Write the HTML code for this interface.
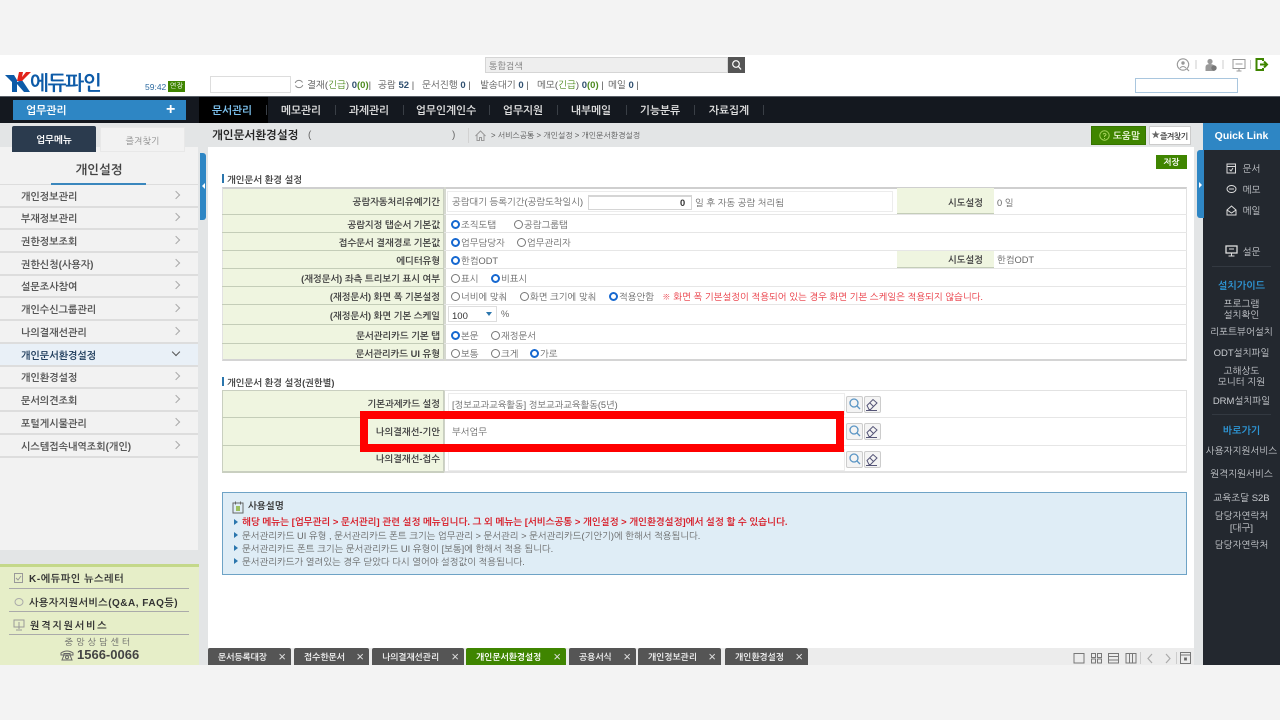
<!DOCTYPE html>
<html lang="ko"><head><meta charset="utf-8"><title>개인문서환경설정</title>
<style>
*{box-sizing:border-box}
html,body{margin:0;padding:0}
body{width:1280px;height:720px;overflow:hidden;background:#f3f3f3;position:relative;font-family:"Liberation Sans","NanumGothic","Noto Sans CJK KR",sans-serif;font-size:10px;color:#555}
.t{position:absolute;white-space:nowrap;line-height:14px;transform:translateY(2px);filter:blur(.25px)}
.b{position:absolute}
.c{text-align:center}
.lb{color:#444;font-weight:bold;font-size:9.3px;letter-spacing:0}
.v{color:#666;font-size:9.3px}
.r{position:absolute;width:9px;height:9px;border:1px solid #777;border-radius:50%;background:#fff}
.r.on{border:2.5px solid #1668d0}
.m{position:absolute;left:0;width:198px;height:23px;border-bottom:2px solid #ddd}
.m span{position:absolute;left:21px;top:4px;line-height:14px;font-size:10px;color:#555;font-weight:bold;white-space:nowrap;transform:translateY(2px);filter:blur(.25px)}
.m i{position:absolute;left:173px;top:7px;width:6px;height:6px;border-top:1px solid #aaa;border-right:1px solid #aaa;transform:rotate(45deg)}
.nav{position:absolute;top:103px;line-height:16px;color:#ddd;font-size:10.7px;font-weight:bold;white-space:nowrap;transform:translateX(-50%);filter:blur(.25px)}
.sp{position:absolute;top:105px;width:1px;height:10px;background:#3a3f46}
.tab{position:absolute;top:648px;height:17px;background:#555;border-radius:2px 2px 0 0;color:#eee;font-size:8.7px;font-weight:bold;line-height:18px;padding-left:10px;white-space:nowrap}
.tab b{position:absolute;right:5px;top:0;font-weight:normal;color:#ddd;font-size:13px;line-height:17px}
.q{position:absolute;left:1203px;width:77px;text-align:center;color:#c9ccd0;font-size:9.5px;line-height:14px;white-space:nowrap;transform:translateY(2px);filter:blur(.25px)}
.ic{position:absolute;width:17px;height:17px;border:1px solid #ccc;background:#f4f4f4;border-radius:2px}
.rw{position:absolute;left:222px;width:965px;height:1px;background:#e6e6e6}
.thl{position:absolute;left:222px;width:222px;background:#eff5e0;border-bottom:1px solid #c4cdb8}
</style></head><body>

<div class="b" style="left:0;top:55px;width:1280px;height:610px;background:#fff"></div>

<!-- header -->
<svg class="b" style="left:4px;top:70px" width="28" height="26" viewBox="0 0 28 26"><path d="M1 5 H10 L13 10 V22 H8 V12 Z" fill="#0d5ba8"/><path d="M13 12 L18 10 L26 22 H20 L13 14 Z" fill="#0d5ba8"/><path d="M13 11 L15 2 H19 L18 7 L22 2 H27 L18 11 Z" fill="#e2231a"/></svg>
<div class="t" style="left:30px;top:70px;font-size:20px;line-height:24px;font-weight:bold;color:#0d5ba8;letter-spacing:-1.1px">에듀파인</div>
<div class="t" style="left:145px;top:78px;font-size:8.5px;color:#2c6aa0">59:42</div>
<div class="b" style="left:168px;top:81px;width:17px;height:11px;background:#3f8500;color:#fff;font-size:7px;line-height:11px;text-align:center">연장</div>
<div class="b" style="left:210px;top:76px;width:81px;height:17px;border:1px solid #ddd;background:#fff"></div>
<svg class="b" style="left:294px;top:79px" width="10" height="10" viewBox="0 0 10 10"><path d="M8.5 3.5A4 4 0 0 0 1.2 4M1.5 6.5A4 4 0 0 0 8.8 6" fill="none" stroke="#888"/></svg>
<div class="t" style="left:307px;top:77px;font-size:9.5px;color:#555">결재(<span style="color:#4c8a1e">긴급</span>) <b style="color:#2f4f6f">0</b><span style="color:#4c8a1e"><b>(0)</b></span>|</div>
<div class="t" style="left:378px;top:77px;font-size:9.5px;color:#555">공람 <b style="color:#2f4f6f">52</b> |</div>
<div class="t" style="left:422px;top:77px;font-size:9.5px;color:#555">문서진행 <b style="color:#2f4f6f">0</b> |</div>
<div class="t" style="left:480px;top:77px;font-size:9.5px;color:#555">발송대기 <b style="color:#2f4f6f">0</b> |</div>
<div class="t" style="left:537px;top:77px;font-size:9.5px;color:#555">메모(<span style="color:#4c8a1e">긴급</span>) <b style="color:#2f4f6f">0</b><span style="color:#4c8a1e"><b>(0)</b></span> |</div>
<div class="t" style="left:608px;top:77px;font-size:9.5px;color:#555">메일 <b style="color:#2f4f6f">0</b> |</div>

<div class="b" style="left:485px;top:57px;width:243px;height:16px;background:#eee;border:1px solid #d5d5d5"></div>
<div class="t" style="left:489px;top:57px;font-size:9px;color:#777">통합검색</div>
<div class="b" style="left:728px;top:57px;width:17px;height:16px;background:#555"></div>
<svg class="b" style="left:730px;top:59px" width="13" height="12" viewBox="0 0 13 12"><circle cx="6" cy="5" r="3.3" fill="none" stroke="#fff" stroke-width="1.2"/><path d="M8.5 7.5L11 10.5" stroke="#fff" stroke-width="1.3"/></svg>

<svg class="b" style="left:1175px;top:57px" width="100" height="16" viewBox="0 0 100 16">
<circle cx="8" cy="7.500" r="5.700" fill="none" stroke="#999" stroke-width="1.100"/><circle cx="8" cy="6" r="1.700" fill="#999"/><path d="M5 11q3-3 6 0" fill="none" stroke="#999"/><path d="M12 12l2 2" stroke="#999" stroke-width="1.200"/>
<path d="M21 3v9" stroke="#ccc"/>
<circle cx="35" cy="4.500" r="2.600" fill="#999"/><path d="M30.500 14V10q0-3 4.500-3t4.500 3v4z" fill="#999"/><circle cx="39" cy="11" r="2.700" fill="#777"/>
<path d="M48 3v9" stroke="#ccc"/>
<rect x="58" y="2.500" width="12" height="9" fill="none" stroke="#999"/><path d="M60.500 7h7M61.500 14h5M64 11.500v2.500" stroke="#999"/>
<path d="M75.500 3v9" stroke="#ccc"/>
<path d="M88 4V2H81.500V13H88V11" fill="none" stroke="#3f8500" stroke-width="2"/><path d="M85 7.500h6M89 4.500l3 3-3 3" fill="none" stroke="#3f8500" stroke-width="2"/>
</svg>
<div class="b" style="left:1135px;top:78px;width:103px;height:15px;border:1px solid #a9c6de;background:#fff"></div>

<!-- nav -->
<div class="b" style="left:0;top:96px;width:1280px;height:27px;background:#14181f;border-top:1px solid #5a6068"></div>
<div class="b" style="left:13px;top:100px;width:173px;height:20px;background:#2e86c4"></div>
<div class="t" style="left:26px;top:102px;color:#fff;font-size:10.800px;font-weight:bold">업무관리</div>
<div class="t" style="left:166px;top:101px;color:#fff;font-size:16px;font-weight:bold">+</div>
<div class="b" style="left:199px;top:97px;width:69px;height:26px;background:#000"></div>
<div class="nav" style="left:232px;color:#7cc0ec">문서관리</div>
<div class="nav" style="left:301px">메모관리</div>
<div class="nav" style="left:369px">과제관리</div>
<div class="nav" style="left:446px">업무인계인수</div>
<div class="nav" style="left:523px">업무지원</div>
<div class="nav" style="left:591px">내부메일</div>
<div class="nav" style="left:660px">기능분류</div>
<div class="nav" style="left:729px">자료집계</div>
<div class="sp" style="left:266px"></div><div class="sp" style="left:335px"></div><div class="sp" style="left:403px"></div><div class="sp" style="left:489px"></div><div class="sp" style="left:557px"></div><div class="sp" style="left:626px"></div><div class="sp" style="left:694px"></div><div class="sp" style="left:763px"></div>

<!-- sub bar -->
<div class="b" style="left:0;top:123px;width:1203px;height:24px;background:#e3e5e6"></div>
<div class="b" style="left:198px;top:147px;width:10px;height:518px;background:#e3e5e6"></div>
<div class="b" style="left:1194px;top:147px;width:9px;height:518px;background:#e3e5e6"></div>
<div class="t" style="left:212px;top:127px;font-size:11.500px;font-weight:bold;color:#222">개인문서환경설정</div>
<div class="t" style="left:308px;top:127px;color:#666">(</div>
<div class="t" style="left:452px;top:127px;color:#666">)</div>
<div class="b" style="left:468px;top:128px;width:1px;height:15px;background:#d2d2d2"></div>
<svg class="b" style="left:475px;top:130px" width="11" height="11" viewBox="0 0 11 11"><path d="M.5 6L5.500 1l5 5M2 5v5.500h2.500V7.500h2v3H9V5" fill="none" stroke="#999"/></svg>
<div class="t" style="left:491px;top:127px;font-size:7.800px;color:#555">&gt; 서비스공통 &gt; 개인설정 &gt; 개인문서환경설정</div>
<div class="b" style="left:1091px;top:126px;width:55px;height:19px;background:#3f8500;border:1px solid #367300"></div>
<svg class="b" style="left:1099px;top:130px" width="11" height="11" viewBox="0 0 11 11"><circle cx="5.500" cy="5.500" r="4.700" fill="none" stroke="#a6d45c"/><path d="M4 4.300Q5.500 2.500 7 4.300Q7 5.500 5.500 6V7M5.500 8v1" fill="none" stroke="#a6d45c"/></svg>
<div class="t" style="left:1113px;top:128px;font-size:9.500px;font-weight:bold;color:#eaf5d8">도움말</div>
<div class="b" style="left:1149px;top:126px;width:42px;height:19px;background:#fff;border:1px solid #ccc"></div>
<div class="t" style="left:1151px;top:127px;font-size:10px;color:#666">★</div>
<div class="t" style="left:1160px;top:128px;font-size:8px;font-weight:bold;color:#444;letter-spacing:-.6px">즐겨찾기</div>

<!-- left panel -->
<div class="b" style="left:0;top:147px;width:198px;height:403px;background:#f2f2f2"></div>
<div class="b" style="left:12px;top:126px;width:84px;height:26px;background:#2b3b4e;border-radius:2px 2px 0 0"></div>
<div class="t c" style="left:12px;top:132px;width:84px;color:#fff;font-size:9.500px;font-weight:bold">업무메뉴</div>
<div class="b" style="left:100px;top:127px;width:85px;height:25px;background:#f2f2f2;border:1px solid #e8e8e8"></div>
<div class="t c" style="left:100px;top:132px;width:85px;color:#888;font-size:9px">즐겨찾기</div>
<div class="t c" style="left:0;top:160px;width:198px;font-size:12.500px;line-height:16px;font-weight:bold;color:#444">개인설정</div>
<div class="b" style="left:0;top:184px;width:198px;height:1px;background:#ddd"></div>
<div class="b" style="left:51px;top:183px;width:95px;height:1.500px;background:#3a87bd"></div>
<div class="m" style="top:185px"><span>개인정보관리</span><i></i></div>
<div class="m" style="top:207px"><span>부재정보관리</span><i></i></div>
<div class="m" style="top:230px"><span>권한정보조회</span><i></i></div>
<div class="m" style="top:253px"><span>권한신청(사용자)</span><i></i></div>
<div class="m" style="top:275px"><span>설문조사참여</span><i></i></div>
<div class="m" style="top:298px"><span>개인수신그룹관리</span><i></i></div>
<div class="m" style="top:321px"><span>나의결재선관리</span><i></i></div>
<div class="m" style="top:344px;background:#e9f0f7"><span style="color:#23405f">개인문서환경설정</span><i style="border-color:#555;transform:rotate(135deg);top:5px"></i></div>
<div class="m" style="top:366px"><span>개인환경설정</span><i></i></div>
<div class="m" style="top:389px"><span>문서의견조회</span><i></i></div>
<div class="m" style="top:412px"><span>포털게시물관리</span><i></i></div>
<div class="m" style="top:435px"><span>시스템접속내역조회(개인)</span><i></i></div>
<div class="b" style="left:0;top:550px;width:198px;height:14px;background:#e3e5e6"></div>
<div class="b" style="left:200px;top:153px;width:6px;height:67px;background:#2e86c4;border-radius:0 3px 3px 0"></div>
<div class="b" style="left:202px;top:183px;border-right:3px solid #fff;border-top:3px solid transparent;border-bottom:3px solid transparent"></div>

<!-- green panel -->
<div class="b" style="left:0;top:564px;width:199px;height:101px;background:#e6eec8;border-top:3px solid #c4d88a"></div>
<svg class="b" style="left:13px;top:572px" width="12" height="62" viewBox="0 0 12 62"><rect x="1.500" y="1.500" width="8" height="9" fill="none" stroke="#999"/><path d="M3 6l2 2 3-4" fill="none" stroke="#999"/><ellipse cx="6" cy="30" rx="4" ry="3.500" fill="none" stroke="#aaa"/><rect x="1" y="48" width="10" height="7" fill="none" stroke="#999"/><path d="M6 50v7M3 58h6" stroke="#999"/></svg>
<div class="t" style="left:29px;top:571px;font-size:10px;font-weight:bold;color:#333;letter-spacing:.6px">K-에듀파인 뉴스레터</div>
<div class="b" style="left:9px;top:588px;width:180px;height:1px;background:#aaa"></div>
<div class="t" style="left:29px;top:595px;font-size:10px;font-weight:bold;color:#333;letter-spacing:.5px">사용자지원서비스(Q&amp;A, FAQ등)</div>
<div class="b" style="left:9px;top:611px;width:180px;height:1px;background:#aaa"></div>
<div class="t" style="left:30px;top:618px;font-size:10px;font-weight:bold;color:#333;letter-spacing:1.8px">원격지원서비스</div>
<div class="b" style="left:9px;top:634px;width:180px;height:1px;background:#aaa"></div>
<div class="t c" style="left:0;top:633px;width:198px;font-size:9px;color:#666;letter-spacing:3px">중앙상담센터</div>
<svg class="b" style="left:60px;top:650px" width="14" height="11" viewBox="0 0 14 11"><path d="M1 3Q7-1 13 3V5H10V3.500H4V5H1ZM4 5H10L12 10H2Z" fill="none" stroke="#666"/><circle cx="7" cy="7.300" r="1.500" fill="none" stroke="#666"/></svg>
<div class="t" style="left:77px;top:645px;font-size:13px;line-height:16px;font-weight:bold;color:#444">1566-0066</div>

<!-- section 1 -->
<div class="b" style="left:222px;top:174px;width:2px;height:9px;background:#2b76ad"></div>
<div class="t lb" style="left:227px;top:171px;color:#444">개인문서 환경 설정</div>
<div class="b" style="left:1156px;top:155px;width:31px;height:14px;background:#3f8500;color:#fff;font-size:8.500px;font-weight:bold;line-height:14px;text-align:center">저장</div>

<div class="thl" style="top:187px;height:174px;border:1px solid #c9cfc0"></div>
<div class="b" style="left:222px;top:187px;width:965px;height:174px;border:1px solid #e2e2e2;border-top:2px solid #cfcfcf;border-bottom:2px solid #d4d4d4"></div>
<div class="b" style="left:444px;top:187px;width:2px;height:174px;background:#d5d8cf"></div>
<div class="rw" style="top:214px"></div><div class="rw" style="top:232px"></div><div class="rw" style="top:250px"></div><div class="rw" style="top:268px"></div><div class="rw" style="top:286px"></div><div class="rw" style="top:304px"></div><div class="rw" style="top:324px"></div><div class="rw" style="top:343px"></div>
<div class="b" style="left:222px;top:214px;width:222px;height:1px;background:#c4cdb8"></div><div class="b" style="left:222px;top:232px;width:222px;height:1px;background:#c4cdb8"></div><div class="b" style="left:222px;top:250px;width:222px;height:1px;background:#c4cdb8"></div><div class="b" style="left:222px;top:268px;width:222px;height:1px;background:#c4cdb8"></div><div class="b" style="left:222px;top:286px;width:222px;height:1px;background:#c4cdb8"></div><div class="b" style="left:222px;top:304px;width:222px;height:1px;background:#c4cdb8"></div><div class="b" style="left:222px;top:324px;width:222px;height:1px;background:#c4cdb8"></div><div class="b" style="left:222px;top:343px;width:222px;height:1px;background:#c4cdb8"></div>

<div class="t lb" style="right:840px;top:193px">공람자동처리유예기간</div>
<div class="t lb" style="right:840px;top:216px">공람지정 탭순서 기본값</div>
<div class="t lb" style="right:840px;top:234px">접수문서 결재경로 기본값</div>
<div class="t lb" style="right:840px;top:252px">에디터유형</div>
<div class="t lb" style="right:840px;top:270px">(재정문서) 좌측 트리보기 표시 여부</div>
<div class="t lb" style="right:840px;top:288px">(재정문서) 화면 폭 기본설정</div>
<div class="t lb" style="right:840px;top:307px">(재정문서) 화면 기본 스케일</div>
<div class="t lb" style="right:840px;top:327px">문서관리카드 기본 탭</div>
<div class="t lb" style="right:840px;top:345px">문서관리카드 UI 유형</div>

<div class="b" style="left:447px;top:191px;width:446px;height:21px;border:1px solid #ececec"></div>
<div class="t v" style="left:452px;top:193px">공람대기 등록기간(공람도착일시)</div>
<div class="b" style="left:588px;top:195px;width:104px;height:15px;border:1px solid #d5d5d5;border-top-width:2px"></div>
<div class="t v" style="left:680px;top:194px;color:#333;font-weight:bold">0</div>
<div class="t v" style="left:695px;top:194px">일 후 자동 공람 처리됨</div>
<div class="b" style="left:897px;top:188px;width:97px;height:26px;background:#eff5e0;border-bottom:1px solid #c4cdb8"></div>
<div class="t lb" style="right:297px;top:194px">시도설정</div>
<div class="t v" style="left:997px;top:194px">0 일</div>
<div class="b" style="left:897px;top:251px;width:97px;height:17px;background:#eff5e0;border-bottom:1px solid #c4cdb8"></div>
<div class="t lb" style="right:297px;top:251px">시도설정</div>
<div class="t v" style="left:997px;top:251px">한컴ODT</div>

<div class="r on" style="left:451px;top:220px"></div><div class="t v" style="left:461px;top:216px">조직도탭</div>
<div class="r" style="left:514px;top:220px"></div><div class="t v" style="left:524px;top:216px">공람그룹탭</div>
<div class="r on" style="left:451px;top:238px"></div><div class="t v" style="left:461px;top:234px">업무담당자</div>
<div class="r" style="left:517px;top:238px"></div><div class="t v" style="left:527px;top:234px">업무관리자</div>
<div class="r on" style="left:451px;top:256px"></div><div class="t v" style="left:461px;top:252px">한컴ODT</div>
<div class="r" style="left:451px;top:274px"></div><div class="t v" style="left:461px;top:270px">표시</div>
<div class="r on" style="left:491px;top:274px"></div><div class="t v" style="left:501px;top:270px">비표시</div>
<div class="r" style="left:451px;top:292px"></div><div class="t v" style="left:461px;top:288px">너비에 맞춰</div>
<div class="r" style="left:520px;top:292px"></div><div class="t v" style="left:530px;top:288px">화면 크기에 맞춰</div>
<div class="r on" style="left:609px;top:292px"></div><div class="t v" style="left:619px;top:288px">적용안함</div>
<div class="t" style="left:662px;top:288px;font-size:9.350px;color:#e8303a">※ 화면 폭 기본설정이 적용되어 있는 경우 화면 기본 스케일은 적용되지 않습니다.</div>
<div class="b" style="left:448px;top:306px;width:49px;height:16px;border:1px solid #ddd"></div>
<div class="t" style="left:452px;top:308px;font-size:9.500px;color:#333">100</div>
<div class="b" style="left:486px;top:312px;border-top:4px solid #2b76ad;border-left:3px solid transparent;border-right:3px solid transparent"></div>
<div class="t v" style="left:501px;top:305px">%</div>
<div class="r on" style="left:451px;top:331px"></div><div class="t v" style="left:461px;top:327px">본문</div>
<div class="r" style="left:491px;top:331px"></div><div class="t v" style="left:501px;top:327px">재정문서</div>
<div class="r" style="left:451px;top:349px"></div><div class="t v" style="left:461px;top:345px">보통</div>
<div class="r" style="left:491px;top:349px"></div><div class="t v" style="left:501px;top:345px">크게</div>
<div class="r on" style="left:530px;top:349px"></div><div class="t v" style="left:540px;top:345px">가로</div>

<!-- section 2 -->
<div class="b" style="left:222px;top:377px;width:2px;height:9px;background:#2b76ad"></div>
<div class="t lb" style="left:227px;top:374px">개인문서 환경 설정(권한별)</div>
<div class="b" style="left:222px;top:390px;width:222px;height:83px;background:#eff5e0;border:1px solid #c9cfc0;border-bottom:2px solid #c9cfc0"></div>
<div class="b" style="left:444px;top:390px;width:743px;height:83px;border-top:1px solid #e2e2e2;border-bottom:2px solid #e2e2e2;border-right:1px solid #e2e2e2;border-left:1px solid #cfd3c8"></div>
<div class="b" style="left:222px;top:417px;width:222px;height:1px;background:#c4cdb8"></div>
<div class="b" style="left:222px;top:445px;width:222px;height:1px;background:#c4cdb8"></div>
<div class="rw" style="top:417px;left:444px;width:743px"></div><div class="rw" style="top:445px;left:444px;width:743px"></div>
<div class="t lb" style="right:840px;top:395px">기본과제카드 설정</div>
<div class="t lb" style="right:840px;top:423px">나의결재선-기안</div>
<div class="t lb" style="right:840px;top:450px">나의결재선-접수</div>
<div class="b" style="left:448px;top:393px;width:397px;height:22px;border:1px solid #ececec"></div>
<div class="t" style="left:452px;top:396px;font-size:9.200px;color:#666">[정보교과교육활동] 정보교과교육활동(5년)</div>
<div class="b" style="left:448px;top:449px;width:397px;height:22px;border:1px solid #ececec"></div>
<div class="b" style="left:360px;top:411px;width:484px;height:41px;border:8px solid #f00"></div>
<div class="t v" style="left:452px;top:423px">부서업무</div>

<div class="ic" style="left:846px;top:396px"></div><div class="ic" style="left:864px;top:396px"></div>
<div class="ic" style="left:846px;top:423px"></div><div class="ic" style="left:864px;top:423px"></div>
<div class="ic" style="left:846px;top:451px"></div><div class="ic" style="left:864px;top:451px"></div>
<svg class="b" style="left:846px;top:396px" width="35" height="72" viewBox="0 0 35 72" fill="none">
<g><circle cx="8" cy="7" r="4" stroke="#5a95c4" stroke-width="1.300"/><path d="M11 10l3 3" stroke="#5a95c4" stroke-width="1.300"/><path d="M21 9.500L27 3.500l4 3.500-6.500 6.500H23ZM23.500 6.500l4 4M20 14.500h11" stroke="#557" stroke-width="1"/></g>
<g transform="translate(0 27)"><circle cx="8" cy="7" r="4" stroke="#5a95c4" stroke-width="1.300"/><path d="M11 10l3 3" stroke="#5a95c4" stroke-width="1.300"/><path d="M21 9.500L27 3.500l4 3.500-6.500 6.500H23ZM23.500 6.500l4 4M20 14.500h11" stroke="#557" stroke-width="1"/></g>
<g transform="translate(0 55)"><circle cx="8" cy="7" r="4" stroke="#5a95c4" stroke-width="1.300"/><path d="M11 10l3 3" stroke="#5a95c4" stroke-width="1.300"/><path d="M21 9.500L27 3.500l4 3.500-6.500 6.500H23ZM23.500 6.500l4 4M20 14.500h11" stroke="#557" stroke-width="1"/></g>
</svg>

<!-- info box -->
<div class="b" style="left:222px;top:492px;width:965px;height:83px;background:#dfedf6;border:1px solid #6ea3c6"></div>
<svg class="b" style="left:232px;top:501px" width="12" height="13" viewBox="0 0 12 13" fill="none"><rect x="1" y="2" width="10" height="10" stroke="#666"/><path d="M3.500 .5v3M8.500 .5v3" stroke="#666"/><rect x="4" y="5" width="4" height="5" fill="#9bbf5e"/></svg>
<div class="t" style="left:248px;top:498px;font-size:9.500px;font-weight:bold;color:#333">사용설명</div>
<div class="b" style="left:234px;top:519px;border-left:4px solid #2b76ad;border-top:3px solid transparent;border-bottom:3px solid transparent"></div>
<div class="t" style="left:242px;top:514px;font-size:9.450px;font-weight:bold;color:#d81f2a">해당 메뉴는 [업무관리 &gt; 문서관리] 관련 설정 메뉴입니다. 그 외 메뉴는 [서비스공통 &gt; 개인설정 &gt; 개인환경설정]에서 설정 할 수 있습니다.</div>
<div class="b" style="left:234px;top:532px;border-left:4px solid #2b76ad;border-top:3px solid transparent;border-bottom:3px solid transparent"></div>
<div class="t v" style="left:242px;top:527px">문서관리카드 UI 유형 , 문서관리카드 폰트 크기는 업무관리 &gt; 문서관리 &gt; 문서관리카드(기안기)에 한해서 적용됩니다.</div>
<div class="b" style="left:234px;top:545px;border-left:4px solid #2b76ad;border-top:3px solid transparent;border-bottom:3px solid transparent"></div>
<div class="t v" style="left:242px;top:540px">문서관리카드 폰트 크기는 문서관리카드 UI 유형이 [보통]에 한해서 적용 됩니다.</div>
<div class="b" style="left:234px;top:558px;border-left:4px solid #2b76ad;border-top:3px solid transparent;border-bottom:3px solid transparent"></div>
<div class="t v" style="left:242px;top:553px">문서관리카드가 열려있는 경우 닫았다 다시 열어야 설정값이 적용됩니다.</div>

<!-- bottom tabs -->
<div class="b" style="left:208px;top:648px;width:986px;height:17px;background:#ececec"></div>
<div class="tab" style="left:208px;width:83px">문서등록대장<b>×</b></div>
<div class="tab" style="left:294px;width:75px">접수한문서<b>×</b></div>
<div class="tab" style="left:372px;width:92px">나의결재선관리<b>×</b></div>
<div class="tab" style="left:466px;width:100px;background:#3f8500;color:#fff">개인문서환경설정<b>×</b></div>
<div class="tab" style="left:569px;width:67px">공용서식<b>×</b></div>
<div class="tab" style="left:638px;width:83px">개인정보관리<b>×</b></div>
<div class="tab" style="left:725px;width:83px">개인환경설정<b>×</b></div>
<svg class="b" style="left:1072px;top:651px" width="122" height="14" viewBox="0 0 122 14" fill="none" stroke="#777">
<rect x="2" y="2.500" width="10" height="9.500"/>
<rect x="19.500" y="2.500" width="4" height="4"/><rect x="25.500" y="2.500" width="4" height="4"/><rect x="19.500" y="8" width="4" height="4"/><rect x="25.500" y="8" width="4" height="4"/>
<rect x="36.500" y="2.500" width="10" height="9.500"/><path d="M36.500 5.500h10M36.500 9h10"/>
<rect x="54" y="2.500" width="10" height="9.500"/><path d="M57.500 2.500v9.500M60.500 2.500v9.500"/>
<path d="M68.500 1v12" stroke="#ccc"/><path d="M80 3L76 7.500 80 12" stroke="#aaa" stroke-width="1.200"/>
<path d="M94 3L98 7.500 94 12" stroke="#aaa" stroke-width="1.200"/><path d="M104.500 1v12" stroke="#ccc"/>
<rect x="108.500" y="1.500" width="10" height="11"/><path d="M108.500 4h10"/><rect x="112.500" y="7" width="2" height="2" fill="#555"/>
</svg>

<!-- right column -->
<div class="b" style="left:1203px;top:123px;width:77px;height:542px;background:#23282f"></div>
<div class="b" style="left:1203px;top:123px;width:77px;height:27px;background:#2e86c4;color:#fff;font-size:10.500px;font-weight:bold;text-align:center;line-height:27px">Quick Link</div>
<div class="b" style="left:1197px;top:150px;width:7px;height:68px;background:#2e86c4;border-radius:3px 0 0 3px"></div>
<div class="b" style="left:1199px;top:182px;border-left:3px solid #fff;border-top:3px solid transparent;border-bottom:3px solid transparent"></div>
<svg class="b" style="left:1225px;top:162px" width="14" height="96" viewBox="0 0 14 96" fill="none" stroke="#ddd">
<rect x="2" y="2" width="8.500" height="9"/><path d="M2 4.500h8.500M4.500 7.500l1.500 1.500 2-3"/>
<ellipse cx="6.500" cy="27" rx="4.500" ry="3.500"/><path d="M4 27h5"/>
<path d="M2 48l4.500-4 4.500 4v5H2ZM2 48l4.500 3 4.500-3"/>
<rect x="1" y="84" width="11" height="7" stroke-width="1.300"/><path d="M4 87h5M6.500 91v3M3.500 94h6"/>
</svg>
<div class="q" style="top:161px;padding-left:20px">문서</div>
<div class="q" style="top:182px;padding-left:20px">메모</div>
<div class="q" style="top:203px;padding-left:20px">메일</div>
<div class="q" style="top:244px;padding-left:20px">설문</div>
<div class="b" style="left:1212px;top:266px;width:59px;height:1px;background:#333941"></div>
<div class="q" style="top:278px;color:#2e96d6;font-weight:bold;font-size:10px">설치가이드</div>
<div class="q" style="top:296px">프로그램</div>
<div class="q" style="top:307px">설치확인</div>
<div class="q" style="top:324px">리포트뷰어설치</div>
<div class="q" style="top:345px">ODT설치파일</div>
<div class="q" style="top:363px">고해상도</div>
<div class="q" style="top:374px">모니터 지원</div>
<div class="q" style="top:393px">DRM설치파일</div>
<div class="b" style="left:1212px;top:414px;width:59px;height:1px;background:#333941"></div>
<div class="q" style="top:423px;color:#2e96d6;font-weight:bold;font-size:10px">바로가기</div>
<div class="q" style="top:443px">사용자지원서비스</div>
<div class="q" style="top:466px">원격지원서비스</div>
<div class="q" style="top:490px">교육조달 S2B</div>
<div class="q" style="top:508px">담당자연락처</div>
<div class="q" style="top:520px">[대구]</div>
<div class="q" style="top:537px">담당자연락처</div>

</body></html>
